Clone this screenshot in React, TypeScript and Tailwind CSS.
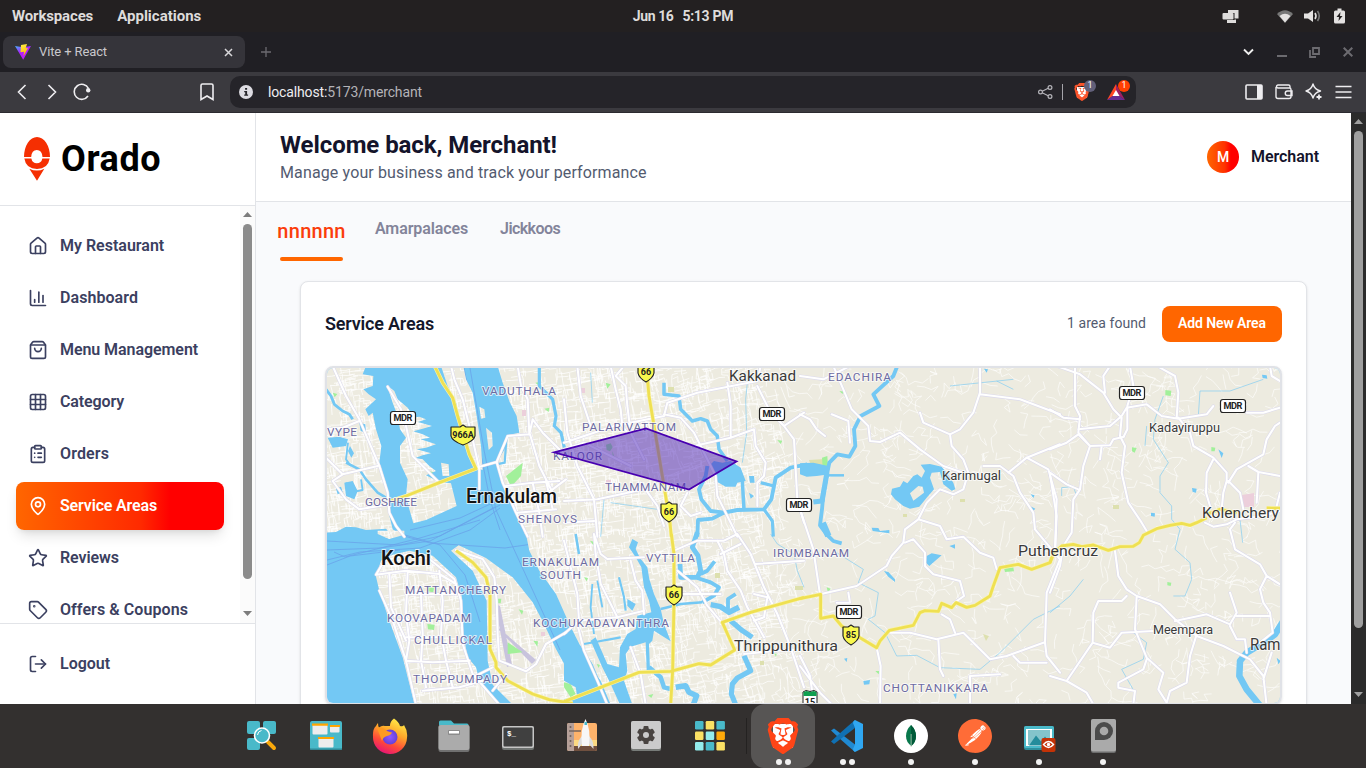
import type { ReactNode } from 'react'
import {
  House, ChartColumn, ShoppingBag, Grid3x3, ClipboardList, MapPin, Star, Tag, LogOut,
} from 'lucide-react'
import { SiBrave, SiPostman } from 'react-icons/si'

/* ---------- map data: every tile is drawn on its own 3x grid ---------- */
type Tile = { x: number; y: number; water?: string; islands?: string; rivers?: [number, string][]; roads?: string; yellow?: string; green?: string }

const tiles: Tile[] = [
  {
    x: 326, y: 366,
    water:
      'M120 0 L345 0 L365 60 L390 110 L405 180 L425 250 L450 305 L470 312 L465 240 L452 150 L440 80 L420 40 L412 0 L515 0 L530 50 L552 110 L572 150 L580 200 L542 208 L536 250 L512 290 L525 345 L550 400 L575 450 L600 512 L232 512 L200 490 L188 440 L188 380 L170 320 L160 290 L166 240 L150 190 L140 140 L128 150 L118 130 L150 100 L128 85 L112 70 L140 60 L142 30 L110 25Z M0 500 L30 498 L60 482 L90 484 L120 492 L180 488 L200 512 L0 512Z M5 215 L40 212 L66 220 L60 240 L20 245Z M55 350 L80 345 L95 375 L85 400 L60 390Z M30 368 L45 362 L50 378 L35 385Z M100 170 L118 175 L120 200 L104 195Z M72 240 L84 262 L76 275 L66 255Z',
    islands:
      'M183 58 L205 75 L215 100 L245 125 L262 150 L250 156 L280 152 L300 160 L276 168 L318 180 L290 188 L262 196 L290 205 L312 215 L284 220 L330 235 L300 245 L272 250 L315 262 L290 268 L268 276 L290 280 L310 300 L330 315 L300 328 L340 348 L375 352 L392 420 L300 462 L262 472 L250 430 L240 390 L245 340 L222 290 L222 240 L240 215 L222 190 L215 150 L200 110Z M460 122 L475 130 L478 155 L465 158Z M480 185 L498 200 L500 240 L488 252 L484 220Z M345 290 L368 295 L370 330 L350 330Z',
    rivers: [[5, 'M240 105 L300 130 L330 160 L345 220 L350 270 L362 300'], [9, 'M240 240 L255 290 L275 320 L290 345'], [8, 'M640 0 L640 60 L660 80 L680 100 L690 150 L685 180 L705 200 L715 245'], [7, 'M0 70 L15 90 L25 115 L50 135 L70 145 L80 160'], [6, 'M60 290 L100 310 L120 340 L155 380 L180 395'], [5, 'M542 208 L536 290 L512 295'], [4, 'M66 230 L60 280 L75 300 M60 350 L72 380 L110 372 L105 340']],
    roads:
      'M20 0 L60 90 L100 160 L130 230 L160 300 L185 380 L190 440 L210 480 L235 512 M0 190 L50 185 L100 165 M0 275 L50 325 L155 300 M50 325 L20 345 L60 400 L100 430 L190 415 M185 62 L225 130 L240 180 L260 270 L310 320 L340 350 M375 0 L385 40 L410 100 L440 220 L460 310 L460 370 M450 305 L512 288 L545 210 L610 205 L605 100 L585 60 L575 0 M610 205 L620 160 L650 200 L715 265 M512 288 L530 350 L570 440 L605 512 M720 340 L680 370 L640 390 M540 360 L620 350 L700 345 M575 440 L690 430 M620 350 L640 440 L650 512 M660 345 L680 430 M612 205 L640 300 L690 400',
    yellow: 'M326 0 L350 50 L380 95 L395 150 L410 200 L430 265 L450 308 L340 350 L240 390 L195 405',
    green: 'M540 330 L590 290 L585 330 L555 362Z M20 80 L34 84 L26 94Z M655 128 L670 125 L668 138Z M305 315 L322 318 L320 328Z M628 50 L642 48 L640 60Z',
  },
  {
    x: 326, y: 534,
    water:
      'M0 0 L150 0 L190 14 L230 -5 L600 0 L610 50 L640 110 L690 180 L730 270 L760 330 L800 390 L850 512 L0 512Z',
    islands:
      'M150 128 L165 80 L200 62 L250 50 L320 65 L390 130 L408 190 L412 300 L425 370 L450 400 L460 440 L520 512 L266 512 L230 370 L190 260 L160 170Z M375 50 L398 34 L480 72 L560 130 L620 205 L650 262 L690 345 L720 400 L760 512 L560 512 L500 452 L485 380 L482 200 L440 110Z M155 0 L190 15 L235 2 L235 -10 L155 -10Z',
    rivers: [[5, 'M260 90 L262 150 L250 200 L256 270'], [8, 'M410 380 L450 370'], [10, 'M600 470 L640 430 L680 440'], [12, 'M580 440 L592 450'], [3, 'M480 440 L530 470']],
    roads:
      'M150 122 L175 80 L250 60 L310 75 L385 135 L405 200 L410 330 L440 420 L520 512 M150 122 L240 110 L340 120 L390 150 M190 120 L195 220 L240 320 M240 180 L390 180 M245 110 L240 240 L250 320 L240 380 M340 110 L350 200 L345 300 L360 380 L380 460 M240 380 L320 385 L430 380 M240 310 L340 310 M285 185 L290 300 L285 380 L300 460 M190 260 L290 255 M440 430 L500 400 M390 48 L470 75 L505 130 L512 200 L515 300 L520 380 L600 412 L630 390 L660 330 L720 295 M540 420 L500 470 M160 170 L200 260 L240 380 L270 512 M290 470 L400 460 L470 440',
    yellow: 'M390 50 L440 85 L480 130 L492 180 L492 345 L510 385 L510 400 L545 440 L620 480 L670 497 L740 508',
    green: 'M545 325 L590 355 L545 360Z M305 158 L325 160 L322 175 L305 172Z M512 194 L526 194 L524 208 L512 208Z M622 320 L636 322 L634 338Z M578 226 L592 230 L588 242Z M304 270 L326 272 L324 288 L306 286Z',
  },
  {
    x: 564, y: 366,
    water: 'M435 300 L450 285 L475 290 L500 285 L530 305 L545 345 L520 350 L515 362 L485 362 L455 345 L452 320Z M555 330 L570 330 L572 350 L558 350Z M555 380 L570 390 L560 398Z',
    rivers: [
      [9, 'M300 50 L300 85 L345 90 L350 130 L385 165 L410 158 L430 165 L440 190 L460 210 L465 250 L490 285'],
      [10, 'M430 300 L425 330 L405 370 L412 400 L440 435 L480 440 L520 432 L600 430 L622 400 L635 335 L680 305 L730 295'],
      [9, 'M535 345 L540 430'], [10, 'M480 440 L445 458 L402 462 L400 512'], [8, 'M600 430 L625 465 L628 512'], [8, 'M590 350 L630 360'], [3, 'M552 30 L545 100 L548 200 L535 290'], [3, 'M140 410 L280 430 M120 400 L110 512'], [3, 'M80 20 L85 110'],
    ],
    roads:
      'M140 0 L155 70 L170 130 L175 180 L190 200 M180 0 L155 30 L185 60 L190 120 L200 200 L240 280 M0 230 L150 180 L300 150 L310 110 L400 80 L580 45 L590 0 M300 145 L350 155 L390 200 L410 240 L455 330 L460 390 L500 470 L520 512 M390 240 L500 215 L570 190 L575 240 L605 290 L600 330 L580 350 L580 420 M580 60 L620 140 L660 180 L690 220 L700 400 L720 470 M0 100 L10 200 L40 300 L90 400 L100 512 M0 405 L100 400 L240 370 M230 350 L280 420 L300 480 M370 380 L350 420 L380 450 L410 440 M490 50 L500 120 L500 210 M40 0 L50 90 L80 180 M720 140 L660 180 M0 250 L60 230 L200 300 M0 470 L90 465',
    yellow: 'M247 0 L255 90 L272 190 L290 300 L305 390 L318 470 L322 512',
    green: 'M125 50 L140 55 L130 68Z M640 222 L655 224 L650 234Z M145 255 L152 275 L146 275Z M126 236 L140 232 L146 244 L138 256 L128 252Z',
  },
  {
    x: 564, y: 534,
    water:
      'M195 40 L205 15 L222 25 L215 45 L228 72 L250 100 L256 135 L270 180 L290 225 L300 270 L320 322 L270 290 L265 320 L255 330 L258 408 L248 408 L245 325 L200 338 L185 360 L190 410 L180 440 L205 512 L168 512 L140 450 L115 400 L80 320 L95 310 L130 390 L165 400 L168 340 L190 300 L215 285 L220 245 L262 235 L255 200 L240 160 L232 100 L215 70Z M0 302 L40 330 L70 385 L110 440 L140 512 L0 512Z M190 195 L215 210 L205 230 L190 215Z',
    rivers: [
      [13, 'M400 -5 L385 40 L402 65 L410 110 L400 130 L350 130 L348 90'], [10, 'M410 120 L430 110 L452 82'], [10, 'M400 132 L440 145 L465 160 L450 185 L415 205'], [6, 'M415 205 L350 210 L290 225'],
      [15, 'M440 212 L470 218 L495 235 L525 220'], [10, 'M492 225 L492 195 L515 180'], [14, 'M500 260 L535 290 L565 310'], [14, 'M540 365 L560 410 L520 432 L505 450 L502 480 L515 512'],
      [12, 'M255 400 L290 430 L300 460 L320 465'], [15, 'M335 460 L365 455 L375 475 L398 485 L388 512'], [5, 'M165 130 L180 190 L185 230'], [5, 'M60 330 L170 310'], [4, 'M85 150 L80 220 L90 300'], [6, 'M35 0 L45 60'], [4, 'M100 140 L115 220'], [3, 'M620 0 L640 30 L690 60 L700 110 L720 160'],
    ],
    islands: 'M0 440 L35 460 L40 490 L0 495Z',
    roads:
      'M0 20 L40 180 L45 260 L0 300 M90 0 L110 60 L130 75 L240 70 M200 80 L215 140 L235 170 L240 240 M330 50 L400 20 L480 20 L520 0 M340 110 L400 160 L430 215 L470 262 M40 270 L60 350 L100 440 L130 512 M460 20 L480 60 L490 110 L530 170 L550 220 L600 310 M520 0 L560 60 L600 160 L640 240 L680 340 L720 460 M575 90 L720 80 M470 60 L530 30 M540 360 L640 350 L720 345 M200 340 L230 420 L245 512 M470 180 L350 180 M40 260 L160 250 L240 230 M570 180 L610 190 L600 250 L570 260 M90 0 L95 60 L110 150 L160 250',
    yellow: 'M322 0 L330 60 L330 200 L326 410 L320 512 M0 503 L110 460 L225 415 L320 412 L405 389 L440 393 L512 348 L475 265 L560 235 L720 190',
    green: 'M0 445 L20 450 L35 480 L20 490 L0 460Z M66 382 L82 385 L78 400 L66 398Z M78 20 L92 24 L88 34Z M60 130 L72 132 L68 142Z M98 390 L108 392 L104 402Z M630 358 L638 360 L636 368Z M252 484 L268 480 L262 492Z',
  },
  {
    x: 800, y: 366,
    water:
      'M0 292 L40 290 L85 300 L88 325 L50 330 L20 332 L0 325Z M362 296 L390 294 L425 302 L440 320 L460 350 L466 370 L455 374 L430 355 L420 318 L395 320 L390 335 L402 370 L380 395 L358 422 L330 428 L310 420 L285 400 L273 385 L276 368 L300 362 L310 345 L322 352 L340 330 L352 325 L365 335 L375 315Z M380 570 L395 562 L425 568 L405 585 L388 600 L378 590Z M215 485 L235 486 L240 495 L268 492 L268 502 L240 498 L218 495Z M252 615 L265 618 L285 640 L285 648 L265 632Z M448 540 L465 535 L465 548Z M132 878 L142 876 L140 888Z M190 945 L210 942 L208 955 L192 956Z M692 385 L704 388 L700 396Z M690 420 L706 428 L700 434Z M460 985 L470 982 L468 1000Z M552 8 L564 10 L560 20Z',
    islands: 'M330 382 L355 360 L368 362 L372 380 L340 404Z',
    rivers: [
      [10, 'M292 0 L280 30 L220 85 L238 120 L182 150 L162 190 L166 240 L148 272 L112 265 L88 290 L80 330 L70 385 L66 430 L60 478 L80 505 L100 525 L125 532'], [18, 'M68 470 L85 510'], [6, 'M85 328 L132 328'], [14, 'M80 325 L66 405 L40 408'],
      [3, 'M110 560 L190 610 L175 650 L235 680 L225 750 L205 760 L255 800 L290 870 L350 868 L420 905 L540 910 L600 860 L700 760 L780 720'], [3, 'M450 60 L640 40 M590 45 L640 70'],
    ],
    roads:
      'M0 30 L70 40 L160 -5 M100 0 L130 70 L155 130 L205 180 L210 225 L240 228 L300 200 L360 250 L430 300 L490 320 M540 0 L540 80 L520 140 L480 190 L450 205 L455 240 L490 280 L505 320 L490 370 L460 385 L420 370 L380 410 L355 460 L315 490 L310 530 L275 570 L260 600 L170 660 L60 685 M360 140 L370 170 L450 205 M540 85 L660 100 L780 145 M355 460 L420 480 L440 520 L490 512 L540 560 L580 575 L590 610 M315 530 L340 520 L375 560 L375 600 L400 625 L480 645 L492 690 L460 712 M550 300 L600 300 L640 330 L660 380 L700 440 L705 490 L780 580 M625 320 L680 275 L780 235 M680 275 L745 310 L770 400 L765 560 M780 580 L740 680 L735 830 L740 870 L780 920 M0 430 L40 550 L60 685 M0 145 L30 160 L50 190 L75 210 M95 145 L145 165 L150 230 M230 845 L242 900 L240 1020 M270 800 L330 800 L410 820 L490 800 L540 850 L570 880 L620 870 L730 830 M425 745 L450 760 L465 800 M415 820 L420 910 L430 930 M145 680 L150 710 L110 710 M640 870 L660 890 L740 890 M0 870 L30 930 L40 1000 M510 1020 L510 930 L600 925 M100 1020 L60 980 L0 900',
    yellow: 'M0 698 L62 685 L62 757 L100 750 L125 780 L180 815 L230 845 L240 825 L268 793 L340 778 L360 740 L375 734 L415 736 L425 712 L455 725 L468 710 L500 724 L525 718 L570 690 L580 660 L600 605 L655 595 L695 610 L750 590 L760 560',
    green: 'M66 275 L82 270 L84 300 L68 302Z M612 606 L640 604 L642 616 L615 618Z M118 76 L130 76 L128 84Z M80 664 L92 668 L84 680Z M226 915 L238 915 L236 925Z',
  },
  {
    x: 1050, y: 366,
    water: 'M636 26 L650 28 L652 38 L638 36Z M505 250 L520 262 L515 276Z M426 366 L440 368 L438 380 L428 378Z M303 440 L315 442 L314 452 L303 450Z M680 875 L692 885 L685 895Z',
    rivers: [[18, 'M700 765 L675 805 L640 830 L590 860 L570 885 L568 930 L590 970 L635 1025'], [3, 'M340 90 L315 160 L310 220 L355 290 L330 330 L330 380 L365 420 L365 460 L390 490 L375 550 L420 590 L425 640 L405 690 L370 690'], [3, 'M445 150 L450 75 L540 75 L640 40'], [3, 'M100 640 L60 690 L0 740'], [3, 'M290 180 L285 240'], [3, 'M250 800 L290 830 L280 880 L215 910 L255 980'], [3, 'M35 390 L35 365 L70 362 L80 390 M570 460 L578 530']],
    roads:
      'M75 0 L75 120 L90 150 L85 200 L120 240 L100 300 L90 370 L70 400 L65 500 L40 540 L30 600 L0 680 M0 130 L40 155 L90 160 M20 0 L90 25 L160 80 L190 130 L215 155 L210 210 L225 240 L215 320 L235 410 L275 470 L290 495 M180 0 L160 30 L165 80 M240 0 L250 60 L232 120 L232 190 L222 210 M85 190 L180 180 L215 150 L230 125 L290 115 L335 150 L385 158 L470 145 L490 120 M380 155 L385 80 L375 30 L330 5 M385 155 L420 200 L430 240 L490 275 L530 320 L530 345 L520 380 L515 430 M0 250 L50 230 L85 205 L120 240 L180 238 L190 220 L222 212 M155 240 L150 280 M490 280 L470 320 L468 380 L480 420 M535 345 L570 380 L580 430 M535 350 L560 310 L640 265 L650 220 L675 180 L690 170 M595 300 L625 318 L690 330 M625 320 L620 410 M590 140 L640 140 L690 125 M620 0 L660 0 L665 30 L690 45 M0 320 L50 355 L85 370 M465 470 L490 482 L530 475 L560 460 L640 450 L690 435 M555 470 L540 490 L555 550 L630 595 L650 630 L690 655 M650 630 L630 670 L640 710 L660 740 L668 800 L630 830 M195 555 L205 630 L230 670 L260 690 L330 715 L375 760 L440 810 L520 840 L600 880 L640 930 L650 1020 M260 690 L255 790 L290 875 L340 920 L325 970 L350 1010 M230 690 L215 705 L145 705 L130 740 L128 830 L60 930 L50 945 L0 930 M128 830 L180 845 L215 800 L310 795 M375 765 L470 745 L540 775 L560 740 L540 680 M560 750 L660 750 M540 780 L560 820 L585 820 L590 860 M440 805 L420 870 L410 950 L360 975 L350 1010 M290 880 L280 910 L205 950 L205 965 L255 975 L250 1015 M50 945 L110 980 L130 1015 M665 860 L640 940 M0 325 L20 450 L15 560 M680 420 L690 380',
    yellow: 'M0 590 L12 560 L35 540 L70 535 L95 542 L130 537 L175 553 L210 542 L250 541 L268 530 L280 508 L320 488 L360 478 L395 472 L420 478 L440 470 L470 455 M470 445 L510 430 L560 440 M650 426 L700 427',
    green: 'M346 72 L364 74 L362 90 L346 88Z M246 244 L260 246 L254 260 L246 256Z M484 243 L496 245 L494 256 L484 256Z M352 648 L364 650 L362 660 L352 658Z',
  },
]

const rand = (() => { let s = 20477; return () => { s = (s * 16807) % 2147483647; return s / 2147483647 } })()

function streets(x0: number, y0: number, w: number, h: number, count: number, step: number, wobble: number, tilt: number) {
  let d = ''
  for (let i = 0; i < count; i++) {
    let x = x0 + rand() * w
    let y = y0 + rand() * h
    const base = (rand() < 0.5 ? tilt : tilt + Math.PI / 2) + (rand() < 0.5 ? Math.PI : 0)
    d += `M${x.toFixed(1)} ${y.toFixed(1)}`
    const n = 2 + Math.floor(rand() * 4)
    for (let k = 0; k < n; k++) {
      const turn = rand() < 0.25 ? (rand() < 0.5 ? 1.57 : -1.57) : 0
      const a = base + turn + (rand() - 0.5) * wobble
      x += Math.cos(a) * step
      y += Math.sin(a) * step
      d += `L${x.toFixed(1)} ${y.toFixed(1)}`
    }
  }
  return d
}
const dense = streets(322, 364, 330, 345, 2300, 5.5, 0.35, -0.12)
const mid = streets(650, 364, 140, 345, 800, 6, 0.6, -0.2)
const sparse = streets(780, 364, 505, 345, 560, 7.5, 1.5, 0.2)

const districts: [string, number, number, number][] = [
  ['VADUTHALA', 482, 391, 74], ['VYPE', 327, 431.5, 30], ['GOSHREE', 365, 501.5, 52], ['SHENOYS', 518, 519, 59],
  ['ERNAKULAM', 522, 561.5, 77], ['SOUTH', 540, 574.5, 41], ['VYTTILA', 646, 558, 49], ['PALARIVATTOM', 582, 427, 94],
  ['KALOOR', 553, 455.5, 49], ['THAMMANAM', 605, 487, 81], ['EDACHIRA', 828, 377, 63], ['IRUMBANAM', 773, 553, 76],
  ['MATTANCHERRY', 405, 589.5, 101], ['KOOVAPADAM', 387, 617.5, 84], ['CHULLICKAL', 414, 640, 78], ['THOPPUMPADY', 413, 679, 94],
  ['KOCHUKADAVANTHRA', 533, 622.5, 136], ['CHOTTANIKKARA', 883, 687.5, 105],
]
const towns: [string, number, number, number, number, number][] = [
  ['Ernakulam', 466, 496, 91, 19.5, 500], ['Kochi', 381, 557.5, 50, 21, 600], ['Kakkanad', 729, 375.5, 67, 15, 400],
  ['Kadayiruppu', 1149, 427.5, 71, 12.5, 400], ['Karimugal', 942, 475.5, 59, 12.5, 400], ['Kolenchery', 1202, 512.5, 77, 15, 400],
  ['Puthencruz', 1018, 550.5, 80, 15.5, 400], ['Thrippunithura', 734, 645, 104, 15.5, 400], ['Meempara', 1153, 629.5, 60, 12.5, 400],
  ['Ram', 1250, 644.5, 30.5, 16, 400],
]
const mdr = [[403, 418], [772, 414], [799, 505], [1132, 393], [1233, 406], [849, 612]]
const shields: [string, number, number, number][] = [['66', 646, 372, 16], ['66', 669, 512, 16], ['66', 674, 595, 16], ['85', 851, 635, 16], ['966A', 463, 435, 24]]

const at = (t: Tile) => `translate(${t.x} ${t.y}) scale(.33333)`

function ServiceMap() {
  return (
    <svg width="954" height="335" viewBox="327 368 954 335" fontFamily="Roboto, sans-serif" className="block">
      <defs>
        <mask id="land" maskUnits="userSpaceOnUse" x="320" y="360" width="970" height="350">
          <rect x="320" y="360" width="970" height="350" fill="#fff" />
          {tiles.map((t, i) => (
            <g key={i} transform={at(t)} fill="none" stroke="#000" strokeLinejoin="round">
              {t.water && <path d={t.water} fill="#000" stroke="none" />}
              {t.rivers?.map(([w, d], k) => <path key={k} d={d} strokeWidth={w + (w > 3 ? 1.5 : 0)} strokeOpacity={w > 3 ? 1 : 0.6} />)}
              {t.islands && <path d={t.islands} fill="#fff" stroke="none" />}
            </g>
          ))}
        </mask>
      </defs>
      <rect x="320" y="360" width="970" height="350" fill="#73c8f4" />
      <g fill="none" stroke="#6aa3ea" strokeWidth=".8">
        <path d="M464 368L478 440L490 500L500 530M470 368L484 450L496 510L560 650M327 541L400 545L440 536L500 505M327 550L380 548L430 541L495 507M327 560L360 552L420 548L470 530L500 508M327 565L350 556L400 550M405 535L440 545L465 575L480 622M400 535L430 543L505 548L560 540M410 530L460 518L510 495M334 552L345 557L420 538L480 520" />
      </g>
      <g mask="url(#land)">
        <rect x="320" y="360" width="970" height="350" fill="#edebe0" />
        <g fill="none" stroke="#fff" strokeWidth=".95">
          <path d={dense} opacity=".8" />
          <path d={mid} opacity=".75" />
          <path d={sparse} opacity=".65" />
        </g>
        <path d="M495 604L500 606L512 665L507 667ZM496 627L500 629L536 660L532 664Z" fill="#c8c3dd" />
        <path d="M580 388h5v5h-5ZM606 480h5v5h-5ZM522 410h4v6h-4ZM487 494h5v5h-5ZM1242 495l12-2v14h-12ZM541 632h4v4h-4Z" fill="#eccfdb" />
        <path d="M668 387h6v5h-6ZM809 460l16-1v8l-14-1ZM715 573h5v5h-5ZM1113 505h6v4h-6ZM983 634l6 2-3 5ZM960 499h5v3h-5ZM903 514h4v3h-4ZM795 586h8v4h-8ZM585 696h8v5h-8ZM760 661h4v4h-4Z" fill="#dde0ae" />
        {tiles.map((t, i) => t.green && <path key={i} transform={at(t)} d={t.green} fill="#a2f09a" />)}
      </g>
      {tiles.map((t, i) => <path key={i} transform={at(t)} d={t.roads} fill="none" stroke="#dcdaec" strokeWidth="9.5" strokeLinejoin="round" strokeLinecap="round" />)}
      {tiles.map((t, i) => <path key={i} transform={at(t)} d={t.roads} fill="none" stroke="#fff" strokeWidth="6.2" strokeLinejoin="round" strokeLinecap="round" />)}
      {tiles.map((t, i) => <path key={i} transform={at(t)} d={t.yellow} fill="none" stroke="#f8f3b0" strokeWidth="12" strokeLinejoin="round" />)}
      {tiles.map((t, i) => <path key={i} transform={at(t)} d={t.yellow} fill="none" stroke="#efe052" strokeWidth="8.5" strokeLinejoin="round" />)}
      <g paintOrder="stroke" stroke="#fff" strokeOpacity=".7" strokeWidth="2" strokeLinejoin="round">
        {districts.map(([t, x, y, w]) => <text key={t} x={x} y={y + 4} fontSize="11.8" textLength={w} fill="#6d6ba2">{t}</text>)}
        {towns.map(([t, x, y, w, s, b]) => <text key={t} x={x} y={y + s * 0.36} fontSize={s} fontWeight={b} textLength={w} lengthAdjust="spacingAndGlyphs" fill={b > 400 ? '#141414' : '#3a3a3a'}>{t}</text>)}
      </g>
      {mdr.map(([x, y]) => (
        <g key={x}>
          <rect x={x - 12.5} y={y - 6.5} width="25" height="13" rx="2.5" fill="#fff" stroke="#222" strokeWidth="1.2" />
          <text x={x} y={y + 3.4} fontSize="9.2" fontWeight="700" textAnchor="middle" textLength="19" fill="#222">MDR</text>
        </g>
      ))}
      {shields.map(([t, x, y, w]) => (
        <g key={`${x}`}>
          <path d={`M${x} ${y - 10}l3 2h${w / 2 - 3}v9q-1 5-${w / 2} 9q-${w / 2 - 1}-4-${w / 2}-9v-9h${w / 2 - 3}Z`} fill="#f9f84e" stroke="#222" strokeWidth="1.2" strokeLinejoin="round" />
          <text x={x} y={y + 3.2} fontSize="9" fontWeight="700" textAnchor="middle" fill="#222">{t}</text>
        </g>
      ))}
      <path d="M803 692l3-1.5 4 1 4-1 3 1.5v14h-14Z" fill="#fff" stroke="#222" />
      <path d="M803.500 692l3-1 4 1 3-1 3 1v4h-13Z" fill="#10a050" />
      <text x="810" y="705" fontSize="9" fontWeight="700" textAnchor="middle" fill="#222">15</text>
      <path d="M554 452.300L646 428.500L736.500 461.500L689 489.500Z" fill="#4a1fb8" fillOpacity=".5" stroke="#4800b0" strokeWidth="1.8" />
    </svg>
  )
}

/* ---------- system and browser chrome ---------- */
function TopPanel() {
  return (
    <div className="relative flex h-8 items-center bg-[#232021] px-3 text-[15px] font-bold text-[#dedcdb]">
      <span className="tracking-[-0.15px]">Workspaces</span>
      <span className="ml-6">Applications</span>
      <div className="absolute inset-x-0 flex justify-center gap-[9px] text-[14px]">
        <span className="tracking-[-0.4px]">Jun 16</span><span className="tracking-[-0.3px]">5:13 PM</span>
      </div>
      <svg className="mr-[38px] ml-auto" width="17" height="15" viewBox="0 0 17 15"><path d="M6 1h10.500v8.500h-4V4H6ZM5 11h7.500V10.500H14V14H5Z" fill="#dedcdb" /><rect x="0.500" y="4" width="11" height="6.500" rx="1" fill="#dedcdb" /></svg>
      <svg className="mr-[11px]" width="16" height="13" viewBox="0 0 16 13"><path d="M0 4Q8-3.500 16 4L8 13Z" fill="#777" /><path d="M2.500 6Q8 1.500 13.500 6L8 12.500Z" fill="#e4e2e1" /></svg>
      <svg className="mr-[13px]" width="17" height="14" viewBox="0 0 17 14"><path d="M0 4.500h4L9 1v12L4 9.500H0Z" fill="#e4e2e1" /><path d="M11 4q2 3 0 6" fill="none" stroke="#e4e2e1" strokeWidth="1.600" /><path d="M13.500 2q3.500 5 0 10" fill="none" stroke="#777" strokeWidth="1.600" /></svg>
      <svg className="mr-[9px]" width="11" height="16" viewBox="0 0 11 16"><path d="M3.500 0.500h4v2h2a1.500 1.500 0 0 1 1.500 1.500v10a1.500 1.500 0 0 1-1.500 1.500h-8a1.500 1.500 0 0 1-1.500-1.500v-10a1.500 1.500 0 0 1 1.500-1.500h2Z" fill="#e4e2e1" /><path d="M6.500 4L2.500 9h2.500l-.5 4 4-5H6Z" fill="#232021" /></svg>
    </div>
  )
}

function TabStrip() {
  return (
    <div className="flex h-10 items-center bg-[#201f24] pr-[13px] pl-[3px] text-[#6c6b70]">
      <div className="flex h-8 w-[242px] items-center rounded-[8px] bg-[#35343a] pr-[12px] pl-3">
        <svg width="16" height="16" viewBox="0 0 16 16">
          <defs>
            <linearGradient id="va" x1="0" y1="0" x2=".6" y2="1"><stop stopColor="#41b8ff" /><stop offset=".5" stopColor="#b01cff" /><stop offset="1" stopColor="#c01cf0" /></linearGradient>
            <linearGradient id="vb" x1="0" y1="0" x2=".3" y2="1"><stop stopColor="#fff04a" /><stop offset="1" stopColor="#ffb800" /></linearGradient>
          </defs>
          <path d="M0 2L8 3.300 16 2 8.200 15.800Z" fill="url(#va)" /><path d="M6 1L12 0 10.700 4.200 13 3.900 8.500 12 9 7.800 5.500 8.200Z" fill="url(#vb)" />
        </svg>
        <span className="ml-2 text-[13px] tracking-[-0.12px] text-[#c9c8cc]">Vite + React</span>
        <svg className="ml-auto" width="9" height="9" viewBox="0 0 9 9"><path d="M1 1l7 7M8 1L1 8" stroke="#d8d7da" strokeWidth="1.500" /></svg>
      </div>
      <svg className="ml-[15px]" width="12" height="12" viewBox="0 0 12 12"><path d="M6 1v10M1 6h10" stroke="#6c6b70" strokeWidth="1.300" /></svg>
      <svg className="mr-[23px] ml-auto" width="11" height="8" viewBox="0 0 11 8"><path d="M1 1.500l4.500 4.500L10 1.500" fill="none" stroke="#eee" strokeWidth="1.900" /></svg>
      <svg className="mr-[22px]" width="10" height="12" viewBox="0 0 10 12"><path d="M0 10h10" stroke="currentColor" strokeWidth="2" /></svg>
      <svg className="mr-[23px]" width="11" height="11" viewBox="0 0 11 11"><path d="M4 1h6v6H4ZM1 3v7h6" fill="none" stroke="currentColor" strokeWidth="1.800" /></svg>
      <svg width="10" height="10" viewBox="0 0 10 10"><path d="M.7.7l8.600 8.600M9.300.7L.7 9.300" stroke="currentColor" strokeWidth="2" /></svg>
    </div>
  )
}

function Toolbar() {
  return (
    <div className="flex h-[41px] items-center border-b border-[#2b2a30] bg-[#3b3a3f] pr-[14px] pl-[17px] text-[#eeedf0]">
      <svg width="75" height="18" viewBox="0 0 75 18" fill="none" stroke="currentColor" strokeWidth="1.600">
        <path d="M8.500 2L1.500 9l7 7M31.500 2l7 7-7 7M71.500 5.500A7.500 7.500 0 1 0 71 13" /><circle cx="71.200" cy="7.300" r="2.200" fill="currentColor" stroke="none" />
      </svg>
      <svg className="ml-[108px]" width="14" height="18" viewBox="0 0 14 18" fill="none" stroke="currentColor" strokeWidth="1.600"><path d="M1 2.500A1.500 1.500 0 0 1 2.500 1h9A1.500 1.500 0 0 1 13 2.500V16.500L7 13 1 16.500Z" /></svg>
      <div className="ml-4 flex h-8 w-[906px] items-center rounded-[10px] bg-[#252429] pr-[11px] pl-[9px]">
        <svg width="14" height="14" viewBox="0 0 14 14"><circle cx="7" cy="7" r="7" fill="#dddce2" /><path d="M6.100 3h2v1.700h-2ZM5.200 6h2.900v3.500h1V10.800H5.200V9.500h1V7.200h-1Z" fill="#252429" /></svg>
        <span className="ml-[15px] text-[14px] tracking-[-0.14px] text-[#eeedf0]">localhost:<span className="text-[#b4b3b8]">5173/merchant</span></span>
        <svg className="ml-auto" width="15" height="14" viewBox="0 0 15 14" fill="none" stroke="#b6b5ba" strokeWidth="1.200"><circle cx="2.500" cy="7" r="1.900" /><circle cx="12" cy="2.500" r="1.900" /><circle cx="12" cy="11.500" r="1.900" /><path d="M4.200 6.200l6-2.900M4.200 7.800l6 2.900" /></svg>
        <span className="ml-[9px] h-4 w-px bg-[#a5a4aa]" />
        <div className="relative ml-[10px] h-[18px] w-[17px]">
          <div className="flex h-[18px] w-[17px] justify-center"><span className="mt-1 h-[11px] w-[10px] bg-white" /></div>
          <SiBrave className="absolute inset-0 size-[18px] text-[#fb542b]" />
          <span className="absolute -top-[3px] left-[11px] flex h-3 w-3 items-center justify-center rounded-full bg-[#62607a] text-[9px] text-white">1</span>
        </div>
        <div className="relative ml-[17px] h-[16px] w-[18px]">
          <svg width="18" height="16" viewBox="0 0 18 16"><path d="M9 0L0 16 9 10Z" fill="#ff4724" /><path d="M9 0l9 16L9 10Z" fill="#9e1f63" /><path d="M0 16l5.500-4h7L18 16Z" fill="#662d91" /><path d="M9 6l3.500 6h-7Z" fill="#fff" /></svg>
          <span className="absolute -top-[4px] left-[11px] flex h-3 w-3 items-center justify-center rounded-full bg-[#ff4000] text-[9px] text-white">1</span>
        </div>
      </div>
      <svg className="ml-auto" width="18" height="16" viewBox="0 0 18 16"><rect x="1" y="1" width="16" height="14" rx="1" fill="none" stroke="currentColor" strokeWidth="1.600" /><path d="M12 1h5v14h-5Z" fill="currentColor" /></svg>
      <svg className="ml-3" width="18" height="16" viewBox="0 0 18 16" fill="none" stroke="currentColor" strokeWidth="1.400"><path d="M1 3V12.500A2 2 0 0 0 3 14.500H14A2 2 0 0 0 16 12.500V5.500A1.500 1.500 0 0 0 14.500 4H3A1.500 1.500 0 0 1 3 1H13.500A1.500 1.500 0 0 1 15 2.500V4M17 7H12.500A2 2 0 0 0 12.500 11.500H17Z" /></svg>
      <svg className="ml-[12px]" width="18" height="18" viewBox="0 0 18 18" fill="none" stroke="currentColor" strokeWidth="1.400"><path d="M8 1Q9.500 6.500 15.500 8 9.500 9.500 8 15 6.500 9.500 1 8 6.500 6.500 8 1Z" strokeLinejoin="round" /><path d="M14 11.500v5M11.500 14h5" strokeWidth="1.800" /></svg>
      <svg className="ml-[12px]" width="17" height="14" viewBox="0 0 17 14" stroke="currentColor" strokeWidth="1.600"><path d="M.5 1.500h16M.5 7h16M.5 12.500h16" /></svg>
    </div>
  )
}

/* ---------- page ---------- */
const nav: [ReactNode, string, string][] = [
  [<House size={20} />, 'My Restaurant', ''], [<ChartColumn size={20} />, 'Dashboard', 'tracking-[0.06px]'],
  [<ShoppingBag size={20} />, 'Menu Management', 'tracking-[-0.07px]'], [<Grid3x3 size={20} />, 'Category', 'tracking-[-0.13px]'],
  [<ClipboardList size={20} />, 'Orders', 'tracking-[0.13px]'], [<MapPin size={20} />, 'Service Areas', 'tracking-[-0.16px]'],
  [<Star size={20} />, 'Reviews', 'tracking-[-0.07px]'], [<Tag size={20} />, 'Offers & Coupons', 'tracking-[0.07px]'],
]

const Arrow = ({ down, color }: { down?: boolean; color: string }) => (
  <svg width="9" height="5" viewBox="0 0 9 5"><path d={down ? 'M0 0h9L4.500 5Z' : 'M0 5h9L4.500 0Z'} fill={color} /></svg>
)

function Sidebar() {
  return (
    <aside className="flex w-64 shrink-0 flex-col border-r border-[#e2e4e8] bg-white">
      <div className="flex h-[93px] shrink-0 items-center border-b border-[#e2e4e8] pl-6">
        <svg width="26" height="44" viewBox="72 410 78 132" fill="#f52f02">
          <path d="M72 470A39 60 0 0 1 150 470H127.500Q126 449 110.500 449Q95 449 93.500 470Z" />
          <path d="M73 474.500H94Q97 489 110.500 489Q124 489 127 474.500H149Q144 506 111 506Q78 506 73 474.500Z" />
          <path d="M88 505Q111 516 133 505L111 541Z" />
        </svg>
        <span className="ml-[11px] text-[36px] font-bold tracking-[0.6px] text-black">Orado</span>
      </div>
      <div className="flex min-h-0 flex-1 overflow-hidden">
        <nav className="flex flex-1 flex-col gap-1 overflow-hidden p-4">
          {nav.map(([icon, label, cls]) => (
            <div key={label} className={`flex h-12 w-[208px] shrink-0 items-center gap-3 rounded-[8px] px-3 text-[16px] font-semibold ${label === 'Service Areas' ? 'bg-[linear-gradient(90deg,#ff6600_0%,#ff2a00_60%,#ff0000_74%)] text-white shadow-[0_8px_14px_-3px_rgba(0,0,0,0.13),0_3px_6px_-3px_rgba(0,0,0,0.1)]' : 'text-[#3b4060]'}`}>
              {icon}<span className={cls}>{label}</span>
            </div>
          ))}
        </nav>
        <div className="flex w-[15px] flex-col items-center bg-[#fbfbfb] pt-[6px] pb-[7px]">
          <Arrow color="#7d7d7d" />
          <div className="mt-[7px] h-[355px] w-[9px] rounded-full bg-[#8b8b8b]" />
          <div className="mt-auto flex"><Arrow down color="#7d7d7d" /></div>
        </div>
      </div>
      <div className="h-[81px] shrink-0 border-t border-[#e2e4e8] p-4">
        <div className="flex h-12 items-center gap-3 px-3 text-[16px] font-semibold text-[#3b4060]"><LogOut size={20} />Logout</div>
      </div>
    </aside>
  )
}

function Content() {
  return (
    <main className="flex min-w-0 flex-1 flex-col overflow-hidden bg-[#f9fafc]">
      <header className="flex h-[89px] shrink-0 items-center border-b border-[#e2e4e8] bg-white pr-8 pl-6">
        <div>
          <h1 className="text-[24px] leading-8 font-bold tracking-[-0.07px] text-[#14142b]">Welcome back, Merchant!</h1>
          <p className="text-[16px] leading-6 tracking-[0.13px] text-[#535b70]">Manage your business and track your performance</p>
        </div>
        <div className="ml-auto flex items-center gap-3">
          <div className="flex size-8 items-center justify-center rounded-full bg-[linear-gradient(90deg,#ff6600_0%,#ff3300_55%,#ff0000_75%)] text-[14px] font-medium text-white">M</div>
          <span className="text-[16px] font-semibold tracking-[-0.05px] text-[#14142b]">Merchant</span>
        </div>
      </header>
      <div className="flex h-[79px] shrink-0 gap-8 pl-6 text-[16px] font-semibold text-[#83849a]">
        <div className="flex w-[63px] flex-col items-center">
          <span className="mt-4 text-[20px] leading-[26px] font-medium tracking-[0.25px] whitespace-nowrap text-[#fb3d0b]">nnnnnn</span>
          <span className="mt-[13px] h-1 w-full rounded-full bg-[#ff6600]" />
        </div>
        <span className="mt-[15px] leading-6 tracking-[-0.11px]">Amarpalaces</span>
        <span className="mt-[15px] leading-6 tracking-[-0.58px]">Jickkoos</span>
      </div>
      <section className="mr-11 ml-11 h-[480px] shrink-0 rounded-[8px] border border-[#e2e4e8] bg-white p-6 shadow-sm">
        <div className="flex h-9 items-center">
          <h2 className="-mt-0.5 text-[18px] font-semibold tracking-[-0.19px] text-[#14182b]">Service Areas</h2>
          <span className="-mt-0.5 ml-auto text-[14px] tracking-[0.06px] text-[#535b70]">1 area found</span>
          <button className="ml-4 h-9 w-[120px] rounded-[8px] bg-[#ff6600] pb-0.5 text-[14px] font-semibold tracking-[-0.1px] text-white">Add New Area</button>
        </div>
        <div className="mt-6 overflow-hidden rounded-[8px] border-2 border-[#e0e2e7] shadow-sm"><ServiceMap /></div>
      </section>
    </main>
  )
}

/* ---------- dock ---------- */
const teal = '#49b9c9'
const dock: [ReactNode, number][] = [
  [<svg width="32" height="32" viewBox="0 0 32 32"><g fill={teal}><rect x="1" y="1" width="13" height="13" rx="2" /><rect x="17" y="1" width="13" height="13" rx="2" /><rect x="1" y="18" width="13" height="12" rx="2" /></g><path d="M22 22l6 6" stroke="#f9a80b" strokeWidth="4" strokeLinecap="round" /><circle cx="16" cy="15.500" r="7.500" fill={teal} stroke="#fff" strokeWidth="1.600" /><path d="M11.500 15a5 5 0 0 1 4-4.500" stroke="#fff" fill="none" /></svg>, 0],
  [<svg width="32" height="32" viewBox="0 0 32 32"><rect y="1" width="32" height="29" rx="2" fill={teal} /><rect y="28.500" width="32" height="1.500" rx=".7" fill="#318a98" /><g fill="#ededed"><rect x="2.500" y="4" width="15" height="10.500" rx="1" /><rect x="20" y="5" width="9.500" height="7.500" rx="1" /><rect x="8.500" y="17.500" width="15" height="10" rx="1" /></g><path d="M2 3.500h16v2.200H2ZM20 5h10v2H20ZM8 17h16v2H8Z" fill="#ffa500" /></svg>, 0],
  [<svg width="36" height="36" viewBox="0 0 36 36"><defs><linearGradient id="ff" x1=".75" y1="0" x2=".3" y2="1"><stop stopColor="#fff14a" /><stop offset=".4" stopColor="#ffa52a" /><stop offset=".7" stopColor="#ff4a38" /><stop offset="1" stopColor="#e5117a" /></linearGradient><radialGradient id="fg"><stop stopColor="#9059ff" /><stop offset="1" stopColor="#6640d8" /></radialGradient></defs><path d="M22 .5Q27 4 28 8Q31 9 32 7Q36 13 35 20A17 16.500 0 0 1 1 19Q.5 11 4 8Q5 6 6 5Q6 8 7 9.500Q10 7 13 8Q17 8 18 8Q18 3 22 .5Z" fill="url(#ff)" /><circle cx="18" cy="19" r="7.500" fill="url(#fg)" /><path d="M5 10Q11 8 15 13Q18 14 20 14.500Q19 17 15 18Q11 19 10 23Q7 15 5 10Z" fill="#ff9a22" /></svg>, 0],
  [<svg width="32" height="32" viewBox="0 0 32 32"><path d="M1 2a1.500 1.500 0 0 1 1.500-1.500H13l3 3h13a1.500 1.500 0 0 1 1.500 1.500V9H1Z" fill={teal} /><rect x="0.500" y="5" width="31" height="27" rx="2" fill="#707070" /><rect x="0.500" y="5" width="31" height="25" rx="2" fill="#ababab" /><rect x="10" y="10" width="12" height="5" rx="1" fill="#8b8b8b" /><rect x="11" y="11" width="10" height="2.500" fill="#fff" /></svg>, 0],
  [<svg width="32" height="32" viewBox="0 0 32 32"><rect y="6" width="32" height="24" rx="2" fill="#6f7371" /><rect y="6" width="32" height="22" rx="2" fill="#c6c6c6" /><rect x="1.500" y="7.500" width="29" height="19" rx="1" fill="#404040" /><text x="5" y="16" fontSize="7.500" fontFamily="Liberation Mono, monospace" fontWeight="700" fill="#fff">$_</text></svg>, 0],
  [<svg width="32" height="34" viewBox="0 0 32 34"><rect x="1" y="4" width="30" height="28" rx="2" fill="#ffb36b" /><path d="M8 21h23v6H8Z" fill="#fbd982" /><path d="M8 27h23v3a2 2 0 0 1-2 2H8Z" fill="#70503f" /><path d="M1 6a2 2 0 0 1 2-2h5v28H3a2 2 0 0 1-2-2Z" fill="#b59f98" /><path d="M3 12h12" stroke="#74645f" strokeWidth="1.500" /><g fill="#6e5f5b"><circle cx="4.500" cy="8" r="1" /><circle cx="4.500" cy="17" r="1" /><circle cx="4.500" cy="22" r="1" /><circle cx="4.500" cy="27" r="1" /></g><path d="M16 17Q11 22 12 30L16 25H23L27.500 30Q28 22 23 17Z" fill="#ddd" /><path d="M19.500 0Q25 10 23 27H16Q14 10 19.500 0Z" fill="#f7f7f7" /><path d="M18.500 3h2.500v3h-2.500Z" fill={teal} /></svg>, 0],
  [<svg width="30" height="30" viewBox="0 0 30 30"><rect width="30" height="30" rx="2" fill="#777b78" /><rect width="30" height="28" rx="2" fill="#cbcbcb" /><g fill="#494441"><circle cx="15" cy="14" r="7" />{[0, 60, 120].map(a => <rect key={a} x="12.500" y="5" width="5" height="18" rx="1" transform={`rotate(${a} 15 14)`} />)}</g><circle cx="15" cy="14" r="3" fill="#cbcbcb" /></svg>, 0],
  [<svg width="30" height="30" viewBox="0 0 30 30">{[teal, '#fae064', teal, '#fae064', '#93ecec', '#ffaa0a', '#93ecec', teal, '#fae064'].map((c, i) => <rect key={i} x={(i % 3) * 10.7} y={Math.floor(i / 3) * 10.5} width="8.500" height="8.500" rx="1.200" fill={c} />)}</svg>, 0],
  [<span className="relative flex size-9 items-center justify-center"><span className="h-[24px] w-[20px] bg-white" /><SiBrave className="absolute inset-0 size-9 text-[#ff4517]" /></span>, 2],
  [<svg width="32" height="32" viewBox="0 0 32 32"><path d="M0 10.500L3 8.500 24 24.500V32Q10 20 0 10.500Z" fill="#2089d2" /><path d="M0 21.500L3 24 24 8V0Q10 12 0 21.500Z" fill="#1070b3" /><path d="M24 0L32 4V28L24 32Q22 31 22 29L24 24.500V8L22 3Q22 1 24 0Z" fill="#30a7f2" /></svg>, 2],
  [<svg width="34" height="34" viewBox="0 0 34 34"><circle cx="17" cy="17" r="17" fill="#fff" /><path d="M17 6Q22 11 22 17Q22 23 17.300 27Q12 23 12 17Q12 11 17 6Z" fill="#08784c" /><path d="M17 6Q22 11 22 17Q22 23 17.300 27Z" fill="#005a39" /><path d="M16.700 15h.8v13h-.8Z" fill="#b9cbb9" /></svg>, 1],
  [<span className="relative flex size-[34px] items-center justify-center"><span className="size-[28px] rounded-full bg-white" /><SiPostman className="absolute inset-0 size-[34px] text-[#ff6c37]" /></span>, 1],
  [<svg width="33" height="32" viewBox="0 0 33 32"><rect x="1" y="6" width="30" height="24" rx="2" fill="#2f8f9c" /><rect x="1" y="6" width="30" height="22" rx="2" fill={teal} /><rect x="3" y="9" width="26" height="17" fill="#fff" /><rect x="5" y="10" width="22" height="15" fill="#84c4cb" /><path d="M6 25.500l7-10 5 6 4-5 5 6v3Z" fill="#248c9b" /><rect x="18.500" y="18" width="14" height="14" rx="2" fill="#c43206" /><path d="M20.500 24.500q5-6 10 0q-5 6-10 0Z" fill="none" stroke="#fff" strokeWidth="1.400" /><circle cx="25.500" cy="24.500" r="1.700" fill="#fff" /></svg>, 1],
  [<svg width="25" height="34" viewBox="0 0 25 34"><rect width="25" height="34" rx="2" fill="#6c6c6c" /><rect width="25" height="32.500" rx="2" fill="#aaa" /><path d="M4 21V12a9 9 0 1 1 9 9Z" fill="#4b4b4b" /><circle cx="13" cy="12" r="4.300" fill="#aaa" /></svg>, 1],
]

function Dock() {
  return (
    <div className="flex h-16 shrink-0 bg-[#33302f] pl-[230px]">
      {dock.map(([icon, dots], i) => (
        <div key={i} className={`relative flex h-16 w-16 items-center justify-center ${i === 8 ? 'ml-[9px] rounded-[14px] bg-[#575554]' : ''}`}>
          {i === 8 && <span className="absolute top-[14px] -left-[5px] h-9 w-px bg-[#242221]" />}
          {icon}
          <div className="absolute bottom-[3px] flex gap-[3px]">
            {Array.from({ length: dots }, (_, k) => <span key={k} className="size-[6px] rounded-full bg-[#f2f2f2]" />)}
          </div>
        </div>
      ))}
    </div>
  )
}

export default function App() {
  return (
    <div className="flex h-[768px] w-[1366px] flex-col overflow-hidden font-['Roboto',sans-serif]">
      <TopPanel />
      <TabStrip />
      <Toolbar />
      <div className="flex h-[591px] shrink-0 overflow-hidden">
        <Sidebar />
        <Content />
        <div className="flex w-[15px] shrink-0 flex-col items-center bg-[#2b2b2b] pt-[6px] pb-[7px]">
          <Arrow color="#a0a0a0" />
          <div className="mt-[7px] h-[497px] w-[9px] rounded-full bg-[#9f9f9f]" />
          <div className="mt-auto flex"><Arrow down color="#a0a0a0" /></div>
        </div>
      </div>
      <Dock />
    </div>
  )
}
